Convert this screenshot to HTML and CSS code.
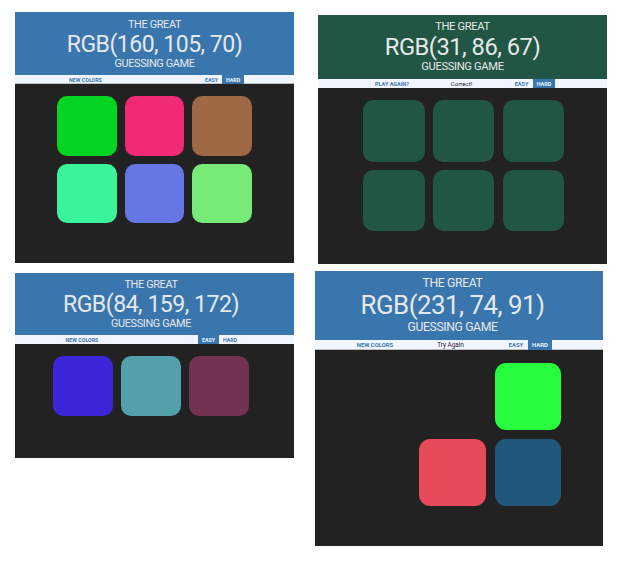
FILE: index.html
```
<!DOCTYPE html>
<html lang="en">
<head>
<meta charset="utf-8">
<title>RGB Guessing Game</title>
<link rel="stylesheet" href="styles.css">
</head>
<body>
<main class="gallery">
  <div class="column">
    <section class="game game-start">
      <header class="banner">
        <span class="line">THE GREAT</span>
        <h1 class="code">RGB(160, 105, 70)</h1>
        <span class="line">GUESSING GAME</span>
      </header>
      <nav class="bar">
        <button class="btn">NEW COLORS</button>
        <span class="message"></span>
        <button class="btn">EASY</button>
        <button class="btn selected">HARD</button>
      </nav>
      <div class="board">
        <div class="square lime"></div><div class="square pink"></div><div class="square brown"></div>
        <div class="square mint"></div><div class="square periwinkle"></div><div class="square leaf"></div>
      </div>
    </section>
    <section class="game game-easy">
      <header class="banner">
        <span class="line">THE GREAT</span>
        <h1 class="code">RGB(84, 159, 172)</h1>
        <span class="line">GUESSING GAME</span>
      </header>
      <nav class="bar">
        <button class="btn">NEW COLORS</button>
        <span class="message"></span>
        <button class="btn selected">EASY</button>
        <button class="btn">HARD</button>
      </nav>
      <div class="board">
        <div class="square indigo"></div><div class="square teal"></div><div class="square plum"></div>
      </div>
    </section>
  </div>
  <div class="column column-right">
    <section class="game game-won">
      <header class="banner">
        <span class="line">THE GREAT</span>
        <h1 class="code">RGB(31, 86, 67)</h1>
        <span class="line">GUESSING GAME</span>
      </header>
      <nav class="bar">
        <button class="btn">PLAY AGAIN?</button>
        <span class="message">Correct!</span>
        <button class="btn">EASY</button>
        <button class="btn selected">HARD</button>
      </nav>
      <div class="board">
        <div class="square forest"></div><div class="square forest"></div><div class="square forest"></div>
        <div class="square forest"></div><div class="square forest"></div><div class="square forest"></div>
      </div>
    </section>
    <section class="game game-retry">
      <header class="banner">
        <span class="line">THE GREAT</span>
        <h1 class="code">RGB(231, 74, 91)</h1>
        <span class="line">GUESSING GAME</span>
      </header>
      <nav class="bar">
        <button class="btn">NEW COLORS</button>
        <span class="message">Try Again</span>
        <button class="btn">EASY</button>
        <button class="btn selected">HARD</button>
      </nav>
      <div class="board">
        <div class="square"></div><div class="square"></div><div class="square green"></div>
        <div class="square"></div><div class="square coral"></div><div class="square navy"></div>
      </div>
    </section>
  </div>
</main>
</body>
</html>
```
FILE: styles.css
```
* { box-sizing: border-box; }

body {
  margin: 0;
  background: #fff;
  font-family: Roboto, "Liberation Sans", sans-serif;
}

.gallery {
  display: flex;
  gap: 21px;
  padding: 12px 0 0 15px;
}

.column {
  display: flex;
  flex-direction: column;
  gap: 10px;
  width: 279px;
}

.column-right {
  gap: 7px;
  width: 292px;
  padding-top: 3px;
}

.game {
  display: flex;
  flex-direction: column;
  background: #222;
}

.banner {
  display: flex;
  flex-direction: column;
  align-items: center;
  flex: none;
  height: var(--banner);
  padding: var(--banner-top) var(--shift) 0 0;
  background: #3a76ae;
  color: #e6e8ea;
}

.line {
  font-size: var(--line-size);
  line-height: 12px;
  letter-spacing: -0.36px;
  white-space: nowrap;
}

.code {
  margin: 0;
  font-size: var(--code-size);
  font-weight: 400;
  line-height: var(--code-line);
  letter-spacing: -0.5px;
  white-space: nowrap;
}

.bar {
  display: grid;
  grid-template-columns: var(--columns);
  flex: none;
  height: var(--bar);
  padding-left: var(--bar-left);
  background: #f0f5ff;
}

.btn {
  padding: 0;
  border: 0;
  background: none;
  color: #3a76ae;
  font: 700 var(--btn-size)/8px Roboto, sans-serif;
  text-align: center;
  white-space: nowrap;
}

.btn.selected {
  background: #3a76ae;
  color: #f0f5ff;
}

.message {
  color: #222;
  font-size: var(--message-size);
  line-height: var(--bar);
  text-align: center;
  white-space: nowrap;
}

.board {
  display: grid;
  grid-template-columns: repeat(3, var(--square));
  grid-auto-rows: var(--square);
  gap: var(--gap);
  padding: var(--board-top) 0 0 var(--board-left);
}

.square { border-radius: 17%; }

.game-start {
  --banner: 63px; --banner-top: 7px; --shift: 0px;
  --line-size: 10.9px; --code-size: 23px; --code-line: 27px;
  --bar: 9px; --bar-left: 50.5px; --columns: 40px 95.5px 21px 22px;
  --btn-size: 5.3px; --message-size: 6px;
  --square: 59.7px; --gap: 8px; --board-top: 12px; --board-left: 42px;
  height: 251px;
}

.game-easy {
  --banner: 62px; --banner-top: 6px; --shift: 7px;
  --line-size: 10.9px; --code-size: 23.1px; --code-line: 27px;
  --bar: 9px; --bar-left: 47px; --columns: 40px 96px 21px 22px;
  --btn-size: 5.3px; --message-size: 6px;
  --square: 60px; --gap: 8px; --board-top: 12px; --board-left: 38px;
  height: 185px;
}

.game-won {
  --banner: 64px; --banner-top: 6px; --shift: 0px;
  --line-size: 11.2px; --code-size: 23.7px; --code-line: 28px;
  --bar: 9px; --bar-left: 53px; --columns: 42px 97px 23px 22px;
  --btn-size: 5.5px; --message-size: 6.1px;
  --square: 61.5px; --gap: 8.3px; --board-top: 12px; --board-left: 45px;
  width: 289px;
  height: 249px;
  margin-left: 3px;
}

.game-won .banner { background: #205643; }

.game-retry {
  --banner: 69px; --banner-top: 6px; --shift: 13px;
  --line-size: 12.2px; --code-size: 25.8px; --code-line: 32px;
  --bar: 10px; --bar-left: 38px; --columns: 44px 107px 24px 24px;
  --btn-size: 5.9px; --message-size: 6.4px;
  --square: 66.7px; --gap: 9.2px; --board-top: 13px; --board-left: 28px;
  width: 288px;
  height: 275px;
}

.game-start .bar,
.game-retry .bar { box-shadow: inset 0 -1px #b8bec8; }

.lime { background: #04d422; }
.pink { background: #f02a74; }
.brown { background: #a06946; }
.mint { background: #3af49c; }
.periwinkle { background: #6577e5; }
.leaf { background: #77ea78; }
.indigo { background: #3d26d9; }
.teal { background: #549fac; }
.plum { background: #723352; }
.forest { background: #205643; }
.green { background: #27fc3e; }
.coral { background: #e74a5b; }
.navy { background: #20577a; }
```
